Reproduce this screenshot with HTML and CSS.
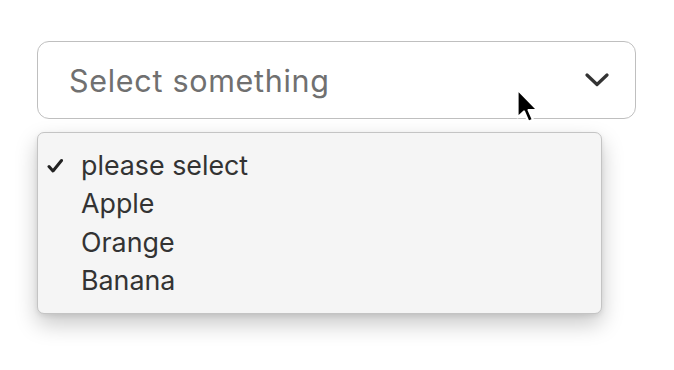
FILE: index.html
```html
<!DOCTYPE html>
<html lang="en">
<head>
<meta charset="utf-8">
<title>Select</title>
<link rel="stylesheet" href="styles.css">
</head>
<body>
<div class="page">
  <div class="select">
    <span class="placeholder">Select something</span>
    <svg class="chevron" width="24" height="14" viewBox="0 0 24 14" aria-hidden="true">
      <path d="M2 2 L12 11.5 L22 2" fill="none" stroke="#333" stroke-width="3.2" stroke-linecap="round" stroke-linejoin="round"/>
    </svg>
    <svg class="cursor" width="26" height="40" viewBox="0 0 26 40" aria-hidden="true">
      <path d="M1.5 1.5 L1.5 29.5 L8 23.5 L12.4 33.8 L17 31.8 L12.6 22 L21.5 22 Z" fill="#000" stroke="#fff" stroke-width="2.2" stroke-linejoin="round"/>
    </svg>
  </div>
  <ul class="menu">
    <li class="item selected">
      <svg class="check" width="16" height="16" viewBox="0 0 16 16" aria-hidden="true">
        <path d="M2 8.5 L6 13 L14.5 2.5" fill="none" stroke="#222" stroke-width="3" stroke-linecap="round" stroke-linejoin="round"/>
      </svg>
      please select
    </li>
    <li class="item">Apple</li>
    <li class="item">Orange</li>
    <li class="item">Banana</li>
  </ul>
</div>
</body>
</html>
```

FILE: styles.css
```css
html, body {
  margin: 0;
  padding: 0;
  background: #ffffff;
}

body {
  font-family: Inter, "Liberation Sans", Arial, sans-serif;
  width: 674px;
  height: 370px;
  overflow: hidden;
}

.page {
  padding: 41px 0 0 37px;
}

.select {
  position: relative;
  box-sizing: border-box;
  width: 599px;
  height: 78px;
  border: 1.5px solid #bfbfbf;
  border-radius: 12px;
  background: #fff;
  display: flex;
  align-items: center;
  justify-content: space-between;
  padding: 0 26px 0 31px;
}

.placeholder {
  font-size: 30.5px;
  color: #707070;
  letter-spacing: 0.7px;
}

.chevron {
  display: block;
}

.cursor {
  position: absolute;
  left: 478px;
  top: 46px;
}

.menu {
  list-style: none;
  margin: 13px 0 0 0;
  box-sizing: border-box;
  width: 565px;
  height: 182px;
  padding: 13px 0 0 0;
  background: #f5f5f5;
  border: 1px solid #c4c4c4;
  border-radius: 7px;
  box-shadow: 0 10px 22px rgba(0, 0, 0, 0.22), 0 2px 5px rgba(0, 0, 0, 0.08);
}

.item {
  position: relative;
  font-size: 26.8px;
  line-height: 38.3px;
  color: #333333;
  padding-left: 43px;
}

.check {
  position: absolute;
  left: 9px;
  top: 12px;
}
```
